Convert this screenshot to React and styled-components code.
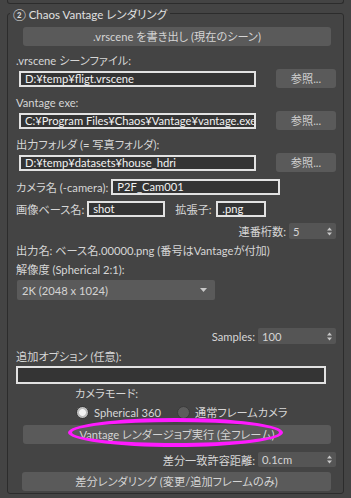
import styled, { createGlobalStyle } from 'styled-components';

const GlobalStyle = createGlobalStyle`
  html, body {
    margin: 0;
    padding: 0;
    background: #444444;
  }
  body {
    font-family: "Lato", "Noto Sans CJK JP", sans-serif;
    font-size: 11.2px;
    font-feature-settings: "palt" 1;
    color: #d6d6d6;
  }
`;

const Panel = styled.div`
  width: 351px;
  height: 498px;
  overflow: hidden;
  background: #444444;
`;

// 上のロールアウトの下端
const PrevRollout = styled.div`
  height: 3px;
  margin: 0 7px;
  border: 1px solid #2c2c2c;
  border-top: none;
  border-radius: 0 0 3px 3px;
`;

const Group = styled.fieldset`
  margin: 0 7px;
  padding: 0;
  border: 1px solid #2c2c2c;
  border-radius: 3px;
  min-width: 0;
`;

const Legend = styled.legend`
  margin-left: 2px;
  padding: 3px 3px 0;
  line-height: 16px;
  font-size: 11.5px;
  color: #e0e0e0;
`;

const Content = styled.div`
  display: flex;
  flex-direction: column;
  padding: 0 7px 2px 8px;
`;

const WideButton = styled.div`
  height: 19px;
  line-height: 19px;
  margin: ${(p) => p.$mt}px 5px 0 ${(p) => p.$ml ?? 7}px;
  background: #5a5a5a;
  border-radius: 3px;
  text-align: center;
  color: #d4d4d4;
  white-space: nowrap;
`;

const Label = styled.div`
  height: 14px;
  line-height: 14px;
  margin-top: ${(p) => p.$mt ?? 0}px;
  margin-left: ${(p) => p.$ml ?? 0}px;
  white-space: nowrap;
`;

const Row = styled.div`
  display: flex;
  align-items: center;
  justify-content: ${(p) => (p.$end ? 'flex-end' : 'flex-start')};
  height: ${(p) => p.$h}px;
  margin-top: ${(p) => p.$mt ?? 0}px;
  padding-left: ${(p) => p.$pl ?? 0}px;
`;

const InlineLabel = styled.div`
  flex: none;
  box-sizing: border-box;
  min-width: ${(p) => p.$w ?? 0}px;
  padding-right: 3px;
  margin-left: ${(p) => p.$ml ?? 0}px;
  white-space: nowrap;
`;

const TextBox = styled.div`
  box-sizing: border-box;
  flex: none;
  width: ${(p) => p.$w}px;
  height: ${(p) => p.$h ?? 16}px;
  margin-left: ${(p) => p.$ml ?? 0}px;
  padding-left: 4px;
  border: 2px solid #e2e2e2;
  background: #343434;
  color: #f2f2f2;
  line-height: ${(p) => (p.$h ?? 16) - 4}px;
  white-space: nowrap;
  overflow: hidden;
`;

const BrowseButton = styled.div`
  flex: none;
  width: 60px;
  height: 19px;
  line-height: 19px;
  margin-left: auto;
  background: #5a5a5a;
  border-radius: 3px;
  text-align: center;
  color: #cfcfcf;
`;

const Spinner = styled.div`
  box-sizing: border-box;
  flex: none;
  display: flex;
  align-items: center;
  width: ${(p) => p.$w}px;
  height: 100%;
  padding: 0 4px 0 4px;
  background: #555555;
  border-radius: 2px;
  color: #d4d4d4;
`;

const SpinValue = styled.span`
  flex: 1;
  white-space: nowrap;
`;

const Arrows = () => (
  <svg width="5" height="9" viewBox="0 0 5 9">
    <path d="M2.5 0.5 L5 3.5 L0 3.5 Z" fill="#c8c8c8" />
    <path d="M2.5 8.5 L5 5.5 L0 5.5 Z" fill="#c8c8c8" />
  </svg>
);

const Dropdown = styled.div`
  box-sizing: border-box;
  display: flex;
  align-items: center;
  width: 198px;
  height: 20px;
  margin-top: 3px;
  margin-left: 1px;
  padding: 0 8px 0 5px;
  background: #5a5a5a;
  border-radius: 2px;
  color: #d4d4d4;
`;

const RadioItem = styled.div`
  display: flex;
  align-items: center;
  width: ${(p) => (p.$w ? `${p.$w}px` : 'auto')};
  white-space: nowrap;
`;

const RadioDot = styled.span`
  box-sizing: border-box;
  width: 13px;
  height: 13px;
  margin-right: 5px;
  border-radius: 50%;
  border: 1px solid #3a3a3a;
  background: ${(p) =>
    p.$on
      ? 'radial-gradient(circle, #f4f4f4 0 3px, #bdbdbd 3.8px)'
      : '#5c5c5c'};
`;

const ButtonWrap = styled.div`
  position: relative;
  display: flex;
  flex-direction: column;
`;

// 注釈のマゼンタ楕円
const Highlight = styled.div`
  position: absolute;
  left: 52px;
  top: -2px;
  width: 215px;
  height: 29px;
  box-sizing: border-box;
  border: 4px solid #ff1aff;
  border-radius: 50%;
  pointer-events: none;
`;

const FileRow = ({ value }) => (
  <Row $h={19} $mt={1}>
    <TextBox $w={237} $ml={3}>{value}</TextBox>
    <BrowseButton>参照...</BrowseButton>
  </Row>
);

const App = () => (
  <Panel>
    <GlobalStyle />
    <PrevRollout />
    <Group>
      <Legend>② Chaos Vantage レンダリング</Legend>
      <Content>
        <WideButton $mt={4}>.vrscene を書き出し (現在のシーン)</WideButton>

        <Label $mt={8}>.vrscene シーンファイル:</Label>
        <FileRow value="D:¥temp¥fligt.vrscene" />

        <Label $mt={8}>Vantage exe:</Label>
        <FileRow value="C:¥Program Files¥Chaos¥Vantage¥vantage.exe" />

        <Label $mt={8}>出力フォルダ (= 写真フォルダ):</Label>
        <FileRow value="D:¥temp¥datasets¥house_hdri" />

        <Row $h={16} $mt={7}>
          <InlineLabel $w={93}>カメラ名 (-camera):</InlineLabel>
          <TextBox $w={169}>P2F_Cam001</TextBox>
        </Row>

        <Row $h={16} $mt={6}>
          <InlineLabel $w={65}>画像ベース名:</InlineLabel>
          <TextBox $w={78}>shot</TextBox>
          <InlineLabel $w={41} $ml={10}>拡張子:</InlineLabel>
          <TextBox $w={50}>.png</TextBox>
        </Row>

        <Row $h={16} $mt={6} $end>
          <InlineLabel>連番桁数:</InlineLabel>
          <Spinner $w={47}>
            <SpinValue>5</SpinValue>
            <Arrows />
          </Spinner>
        </Row>

        <Label $mt={5}>出力名: ベース名.00000.png (番号はVantageが付加)</Label>
        <Label $mt={5}>解像度 (Spherical 2:1):</Label>
        <Dropdown>
          <SpinValue>2K (2048 x 1024)</SpinValue>
          <svg width="7" height="4" viewBox="0 0 7 4">
            <path d="M0 0 L7 0 L3.5 4 Z" fill="#c8c8c8" />
          </svg>
        </Dropdown>

        <Row $h={16} $mt={28} $end>
          <InlineLabel>Samples:</InlineLabel>
          <Spinner $w={78}>
            <SpinValue>100</SpinValue>
            <Arrows />
          </Spinner>
        </Row>

        <Label $mt={6}>追加オプション (任意):</Label>
        <Row $h={18} $mt={2}>
          <TextBox $w={310} $h={18} />
        </Row>

        <Label $mt={3} $ml={59}>カメラモード:</Label>
        <Row $h={16} $mt={3} $pl={60}>
          <RadioItem $w={101}>
            <RadioDot $on />
            Spherical 360
          </RadioItem>
          <RadioItem>
            <RadioDot />
            通常フレームカメラ
          </RadioItem>
        </Row>

        <ButtonWrap>
          <WideButton $mt={5}>Vantage レンダージョブ実行 (全フレーム)</WideButton>
          <Highlight />
        </ButtonWrap>

        <Row $h={15} $mt={8} $end>
          <InlineLabel>差分一致許容距離:</InlineLabel>
          <Spinner $w={78}>
            <SpinValue>0.1cm</SpinValue>
            <Arrows />
          </Spinner>
        </Row>

        <WideButton $mt={5} $ml={6}>
          差分レンダリング (変更/追加フレームのみ)
        </WideButton>
      </Content>
    </Group>
  </Panel>
);

export default App;
